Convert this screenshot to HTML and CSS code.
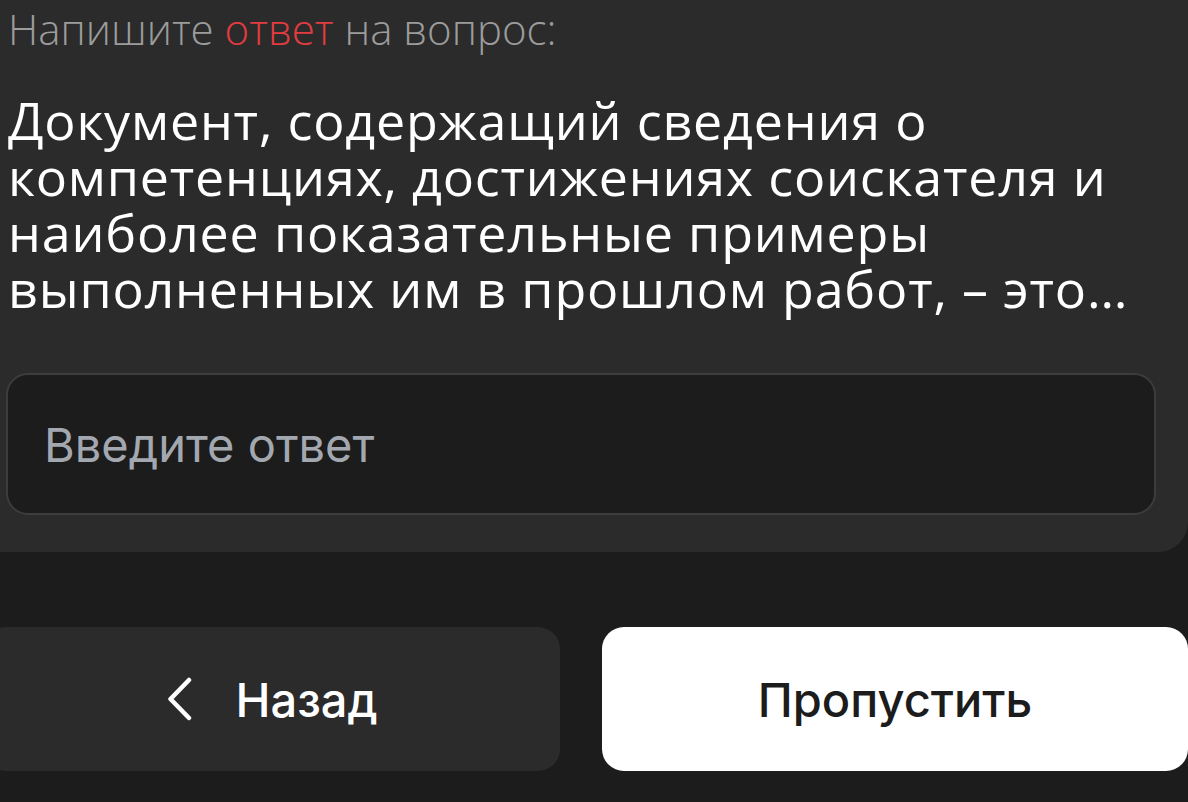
FILE: index.html
```html
<!DOCTYPE html>
<html lang="ru">
<head>
    <meta charset="UTF-8">
    <meta name="viewport" content="width=device-width, initial-scale=1.0">
    <title>Вопрос</title>
    <link rel="stylesheet" href="styles.css">
</head>
<body>
    <div class="card">
        <p class="task">Напишите <span class="accent">ответ</span> на вопрос:</p>
        <p class="question">Документ, содержащий сведения о компетенциях, достижениях соискателя и наиболее показательные примеры выполненных им в прошлом работ, – это…</p>
        <input class="answer" type="text" placeholder="Введите ответ">
    </div>
    <div class="actions">
        <button class="btn btn-back">
            <svg class="chevron" width="26" height="44" viewBox="0 0 26 44">
                <path d="M23 3 L4.5 22 L23 41" fill="none" stroke="#fff" stroke-width="4.5" stroke-linecap="round" stroke-linejoin="round"/>
            </svg>
            Назад
        </button>
        <button class="btn btn-skip">Пропустить</button>
    </div>
</body>
</html>
```

FILE: styles.css
```css
body {
    margin: 0;
    background-color: #1c1c1c;
    font-family: "Open Sans", sans-serif;
    overflow: hidden;
}

.card {
    background-color: #2b2b2b;
    border-radius: 0 0 30px 30px;
    margin-left: -40px;
    padding: 0 32px 37px 46px;
}

.task {
    margin: 0;
    padding-left: 2px;
    font-size: 42px;
    line-height: 58px;
    font-weight: 300;
    color: #9c9c9c;
}

.accent {
    color: #e23b40;
}

.question {
    margin: 34px 0 0;
    padding-left: 2px;
    font-size: 52px;
    line-height: 56px;
    letter-spacing: 0.8px;
    color: #ffffff;
}

.answer {
    display: block;
    box-sizing: border-box;
    width: 100%;
    height: 142px;
    margin-top: 57px;
    padding: 0 36px;
    background-color: #1c1c1c;
    border: 2px solid #3c3c3c;
    border-radius: 22px;
    font-family: Inter, sans-serif;
    font-size: 47px;
    color: #ffffff;
    outline: none;
}

.answer::placeholder {
    color: #a3a8b0;
}

.actions {
    display: flex;
    gap: 42px;
    margin: 75px 0 0 -16px;
}

.btn {
    display: flex;
    align-items: center;
    justify-content: center;
    height: 144px;
    border: none;
    border-radius: 22px;
    font-family: Inter, sans-serif;
    font-size: 47px;
    font-weight: 500;
    cursor: pointer;
}

.btn-back {
    width: 576px;
    gap: 43px;
    background-color: #2b2b2b;
    color: #ffffff;
}

.btn-skip {
    width: 586px;
    background-color: #ffffff;
    color: #1c1c1c;
}
```
